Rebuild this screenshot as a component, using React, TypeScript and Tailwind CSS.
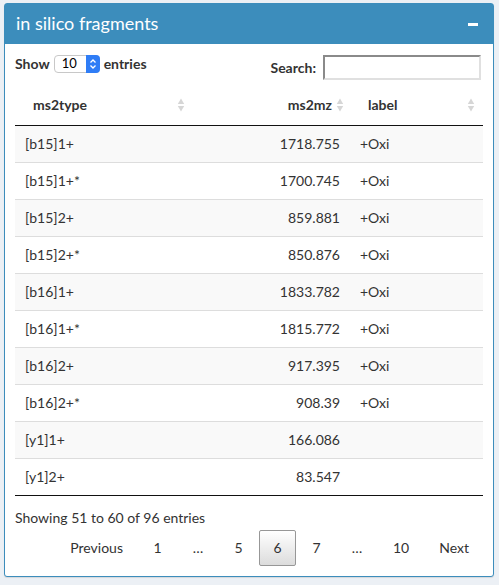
import React from 'react';

const rows = [
  { type: '[b15]1+', mz: '1718.755', label: '+Oxi' },
  { type: '[b15]1+*', mz: '1700.745', label: '+Oxi' },
  { type: '[b15]2+', mz: '859.881', label: '+Oxi' },
  { type: '[b15]2+*', mz: '850.876', label: '+Oxi' },
  { type: '[b16]1+', mz: '1833.782', label: '+Oxi' },
  { type: '[b16]1+*', mz: '1815.772', label: '+Oxi' },
  { type: '[b16]2+', mz: '917.395', label: '+Oxi' },
  { type: '[b16]2+*', mz: '908.39', label: '+Oxi' },
  { type: '[y1]1+', mz: '166.086', label: '' },
  { type: '[y1]2+', mz: '83.547', label: '' },
];

function SortIcon() {
  return (
    <svg width="8" height="14" viewBox="0 0 8 14" className="shrink-0">
      <path d="M4 0.5 L7.2 6 L0.8 6 Z" fill="#d6d6d6" />
      <path d="M4 13.5 L7.2 8 L0.8 8 Z" fill="#d6d6d6" />
    </svg>
  );
}

const pages = ['Previous', '1', '…', '5', '6', '7', '…', '10', 'Next'];

export default function App() {
  return (
    <div className="min-h-[585px] bg-[#ecf0f5] pt-[3px] pl-[4px] pr-[5px] text-[14px] text-[#333]" style={{ fontFamily: 'Lato, "Liberation Sans", sans-serif' }}>
      <div className="rounded-[3px] border border-[#3c8dbc] bg-white shadow-[0_1px_1px_rgba(0,0,0,0.1)]">
        {/* header */}
        <div className="flex h-[40px] items-center justify-between bg-[#3c8dbc] pb-[2px] pl-[11px] pr-[15px] text-white">
          <span className="text-[18px] leading-none">in silico fragments</span>
          <span className="mt-[2px] block h-[3px] w-[10px] bg-white" />
        </div>

        {/* body */}
        <div className="px-[10px] pt-[11px] pb-[10px]">
          <div className="flex items-start justify-between">
            <div className="-mt-[2px] flex items-center gap-[4px] font-bold">
              <span>Show</span>
              <div className="flex h-[18px] w-[46px] items-center rounded-[4px] border border-[#c8c8c8] bg-white font-normal text-[13px] text-black">
                <span className="flex-1 pl-[7px] leading-none">10</span>
                <span className="flex h-[18px] w-[14px] items-center justify-center rounded-r-[4px] bg-[#2f7df6] -mr-px">
                  <svg width="8" height="12" viewBox="0 0 8 12">
                    <path d="M1.5 4.5 L4 2 L6.5 4.5" stroke="white" strokeWidth="1.3" fill="none" />
                    <path d="M1.5 7.5 L4 10 L6.5 7.5" stroke="white" strokeWidth="1.3" fill="none" />
                  </svg>
                </span>
              </div>
              <span>entries</span>
            </div>
            <div className="flex items-center gap-[7px] pr-[2px] font-bold">
              <span>Search:</span>
              <div className="h-[25px] w-[158px] border-2 border-t-[#8a8a8a] border-l-[#8a8a8a] border-b-[#e0e0e0] border-r-[#e0e0e0] bg-white" />
            </div>
          </div>

          {/* table */}
          <div className="mt-[5px]">
            <div className="grid grid-cols-[180px_155px_1fr] border-b border-[#111] font-bold">
              <div className="flex items-center justify-between pt-[9px] pb-[10px] pl-[18px] pr-[10px]">
                <span>ms2type</span>
                <SortIcon />
              </div>
              <div className="flex items-center justify-end gap-[4px] pt-[9px] pb-[10px] pr-[6px]">
                <span>ms2mz</span>
                <SortIcon />
              </div>
              <div className="flex items-center justify-between pt-[9px] pb-[10px] pl-[18px] pr-[8px]">
                <span>label</span>
                <SortIcon />
              </div>
            </div>
            {rows.map((r, i) => (
              <div
                key={i}
                className={`grid grid-cols-[180px_155px_1fr] leading-[20px] ${i > 0 ? 'border-t border-[#ddd]' : ''} ${i % 2 === 0 ? 'bg-[#f9f9f9]' : 'bg-white'}`}
              >
                <div className="py-[8px] pl-[10px]">{r.type}</div>
                <div className="py-[8px] pr-[10px] text-right">{r.mz}</div>
                <div className="py-[8px] pl-[10px]">{r.label}</div>
              </div>
            ))}
            <div className="border-t border-[#111]" />
          </div>

          <div className="mt-[12px] leading-[20px]">Showing 51 to 60 of 96 entries</div>

          <div className="mt-[2px] flex justify-end gap-[2px]">
            {pages.map((p, i) => (
              <span
                key={i}
                className={`min-w-[37px] rounded-[2px] border px-[13px] py-[7px] text-center leading-[20px] ${
                  p === '6'
                    ? 'border-[#979797] bg-gradient-to-b from-white to-[#dcdcdc]'
                    : 'border-transparent'
                } ${p === '…' ? 'min-w-[40px] px-[8px]' : ''}`}
              >
                {p}
              </span>
            ))}
          </div>
        </div>
      </div>
    </div>
  );
}
